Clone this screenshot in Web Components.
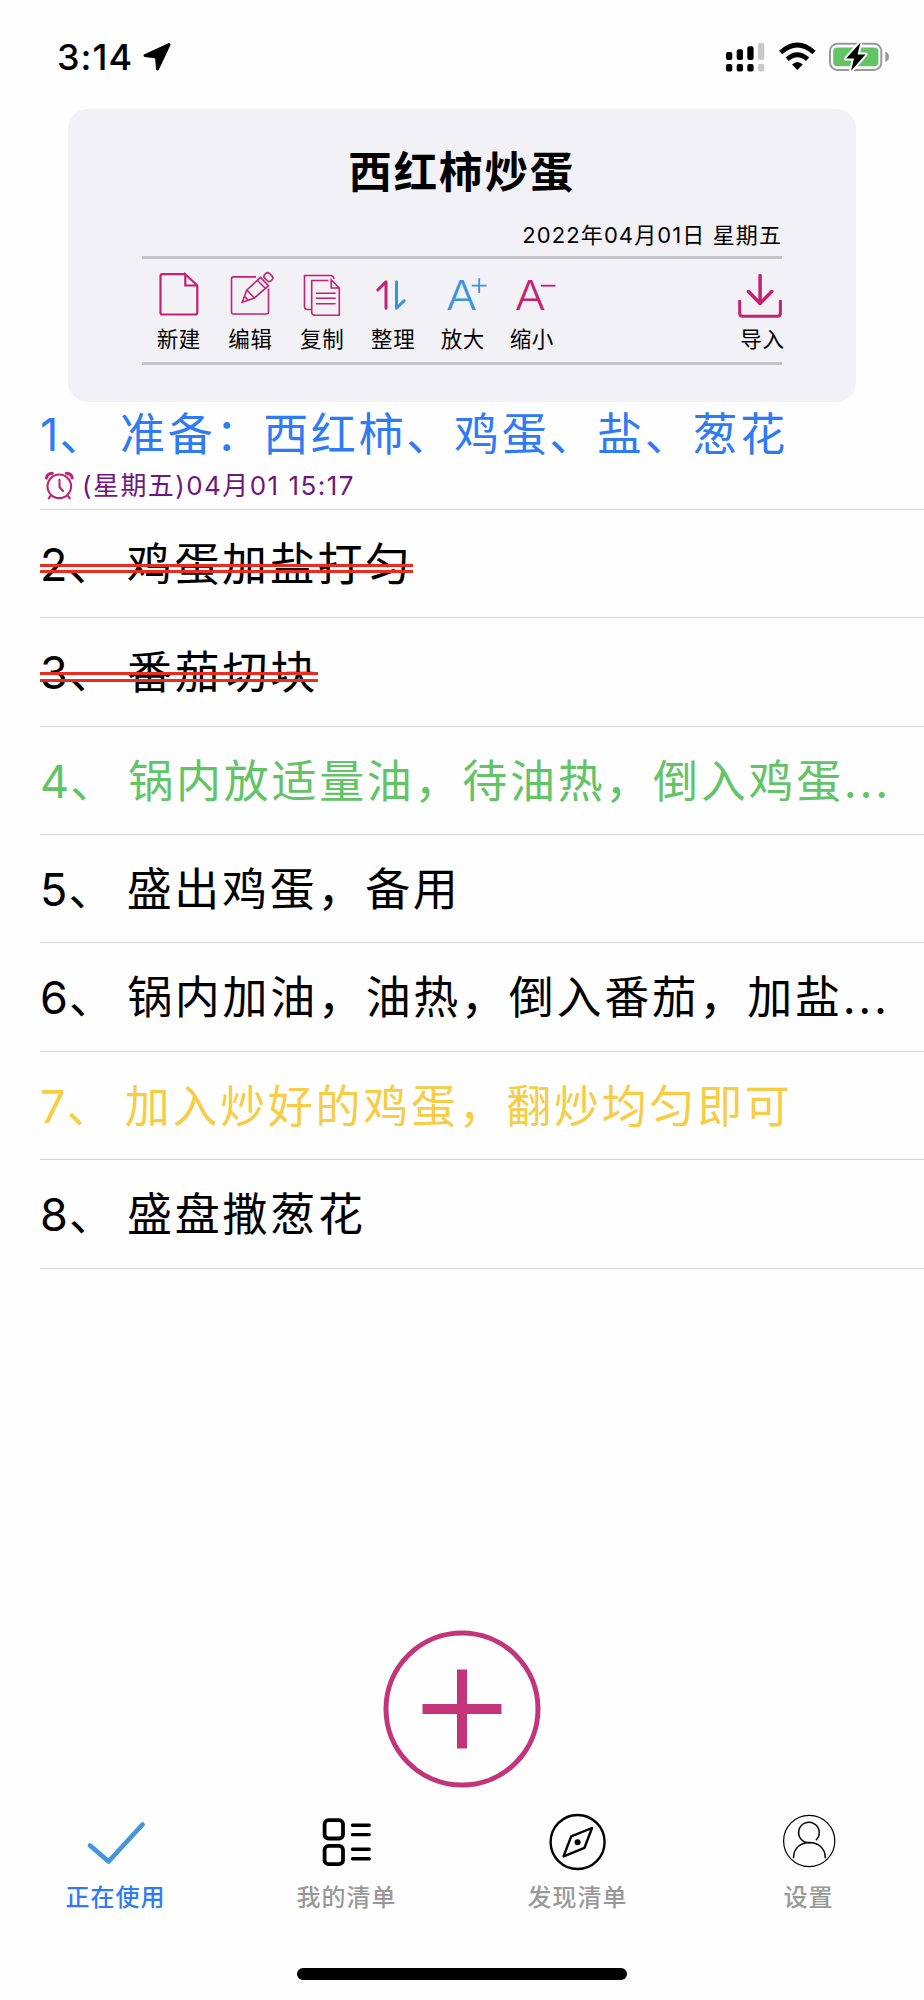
<!DOCTYPE html>
<html lang="zh-CN">
<head>
<meta charset="utf-8">
<title>西红柿炒蛋</title>
<style>
	body{
		margin: 0;
		background: #fefefe;
		color: #000;
		font-family: Inter, "Noto Sans CJK SC", sans-serif;
	}
</style>
</head>
<body>
<check-app>
	<status-bar time="3:14"></status-bar>
	<list-header name="西红柿炒蛋" date="2022年04月01日 星期五">
		<tool-button icon="new">新建</tool-button>
		<tool-button icon="edit">编辑</tool-button>
		<tool-button icon="copy">复制</tool-button>
		<tool-button icon="sort">整理</tool-button>
		<tool-button icon="bigger">放大</tool-button>
		<tool-button icon="smaller">缩小</tool-button>
		<tool-button icon="import" class="last">导入</tool-button>
	</list-header>
	<list-item num="1" color="#2f7bf6" remind="(星期五)04月01 15:17">准备：西红柿、鸡蛋、盐、葱花</list-item>
	<list-item num="2" done>鸡蛋加盐打匀</list-item>
	<list-item num="3" done>番茄切块</list-item>
	<list-item num="4" color="#62c466">锅内放适量油，待油热，倒入鸡蛋...</list-item>
	<list-item num="5">盛出鸡蛋，备用</list-item>
	<list-item num="6">锅内加油，油热，倒入番茄，加盐...</list-item>
	<list-item num="7" color="#f6cd45">加入炒好的鸡蛋，翻炒均匀即可</list-item>
	<list-item num="8">盛盘撒葱花</list-item>
	<add-button slot="bottom"></add-button>
	<tab-bar slot="bottom">
		<tab-item icon="check" selected>正在使用</tab-item>
		<tab-item icon="list">我的清单</tab-item>
		<tab-item icon="compass">发现清单</tab-item>
		<tab-item icon="user">设置</tab-item>
	</tab-bar>
</check-app>

<script>
const PINK = '#c4226f';
const BLUE = '#3a94da';

// toolbar icons, 60 x 52
const TOOL_ICONS = {
	new: `<g stroke="${PINK}" stroke-width="2.2"><path d="M37.3 6.2H14.5q-2 0-2 2V44.5q0 2 2 2H47.3q2 0 2-2V17.5L37.3 6.2V17.5H49"/></g>`,
	edit: `<g stroke="${PINK}" stroke-width="1.6">
		<path d="M36 8.9H13.5q-2 0-2 2V44q0 2 2 2H46.5q2 0 2-2V20.5"/>
		<path d="M26.8 22L40.5 9.4L48.5 17.7L34.5 30L22.2 34.3ZM26.8 22L34.5 30M37.5 12.5L45.5 20.5M24.7 28.5L28 32"/>
		<rect x="44" y="5.8" width="8.8" height="6.6" rx="2.5" transform="rotate(45 48.4 9.1)"/></g>`,
	copy: `<g stroke="${PINK}" stroke-width="1.6">
		<path d="M42 11Q41.5 7.5 38.5 7.5H12.5V38.5q0 3 3 3H19.5"/>
		<path d="M36.5 12.5H19.7V44q0 3.3 3.3 3.3H47.3V20L39.2 12V20H47.3"/>
		<path d="M24 25.2H43.7M24 30.3H43.7M24 35.7H43.7"/></g>`,
	sort: `<g stroke-width="3" stroke-linecap="round" stroke-linejoin="round">
		<path stroke="${PINK}" d="M14.8 22L23 13.8V40.2"/>
		<path stroke="${BLUE}" d="M33.5 13.8V40.2L41 32.9"/></g>`,
	bigger: `<text x="14" y="42" textLength="31" lengthAdjust="spacingAndGlyphs" fill="${BLUE}">A</text><path stroke="${BLUE}" stroke-width="1.8" d="M39.8 17.7H54.5M47.2 10.3V25"/>`,
	smaller: `<text x="13.7" y="42" textLength="31" lengthAdjust="spacingAndGlyphs" fill="${PINK}">A</text><path stroke="${PINK}" stroke-width="1.8" d="M39.8 17.7H54.5"/>`,
	import: `<g stroke="${PINK}" stroke-width="3.5" stroke-linecap="round" stroke-linejoin="round">
		<path d="M28.1 7.5V35.5M16.5 23.5L28.1 35.5L39.8 23.5"/>
		<path stroke-width="3" stroke-linecap="butt" d="M7.7 32V45.3q0 3 3 3H45.4q3 0 3-3V32"/></g>`
};

// tab icons, 60 x 60
const TAB_ICONS = {
	check: `<path stroke="#4696d8" stroke-width="4.8" stroke-linecap="round" stroke-linejoin="round" d="M4 33.5L22.6 49.5L56.5 12.5"/>`,
	list: `<g stroke="#000" stroke-width="3.8"><rect x="7.6" y="8.1" width="18.4" height="18.4" rx="4"/><rect x="7.6" y="33.8" width="18.4" height="18.4" rx="4"/></g>
		<path stroke="#000" stroke-width="3.4" stroke-linecap="round" d="M35.5 13.3H52.2M35.5 22.6H52.2M35.5 37.3H52.2M35.5 46.7H52.2"/>`,
	compass: `<g stroke="#000" stroke-width="2.4" stroke-linejoin="round"><circle cx="29.6" cy="30" r="27"/><path d="M44 16L23.2 24.4L15.6 44.3L36.5 35.8Z"/></g><circle cx="29.6" cy="30.2" r="3" fill="#000"/>`,
	user: `<g stroke="#000"><circle cx="30.2" cy="29" r="25.6" stroke-width="1.2"/>
		<path stroke-width="1.5" stroke-linecap="round" d="M37.3 27.8A10.3 10.3 0 1 0 30.2 30.9M14.5 45.8C14.6 25.3 46.2 25.3 46.3 45.8"/></g>`
};

class CheckApp extends HTMLElement {

	constructor(){
		super();
		this.attachShadow({mode : 'open'}).innerHTML = `
			<style>
				:host{
					display: flex;
					flex-direction: column;
					height: 2000px;
					width: 924px;
					overflow: hidden;
				}
				.bottom{
					margin-top: auto;
				}
			</style>
			<slot></slot>
			<div class="bottom"><slot name="bottom"></slot></div>
		`;
	}
}

class StatusBar extends HTMLElement {

	connectedCallback(){
		this.attachShadow({mode : 'open'}).innerHTML = `
			<style>
				:host{
					display: flex;
					align-items: center;
					box-sizing: border-box;
					height: 108.5px;
					padding: 5px 32px 0 57px;
				}
				.time{
					font-size: 36px;
					font-weight: 500;
					line-height: 44px;
					letter-spacing: 1px;
				}
				.arrow{
					margin-left: 8.5px;
				}
				.right{
					margin-left: auto;
				}
			</style>
			<span class="time">${this.getAttribute('time')}</span>
			<svg class="arrow" width="30" height="30" viewBox="0 0 30 30"><path d="M27 2.5L3 13.5L14.5 15L15.5 27Z" stroke="#000" stroke-width="3" stroke-linejoin="round"/></svg>
			<svg class="right" width="168" height="34" viewBox="0 0 168 34" fill="none">
				<g fill="#000">
					<rect x="2" y="12" width="6.3" height="8" rx="2"/><rect x="12.7" y="9.3" width="6.3" height="10.7" rx="2"/><rect x="23.3" y="6.2" width="6.3" height="13.8" rx="2"/>
					<rect x="2" y="24" width="6.3" height="7.5" rx="2"/><rect x="12.7" y="24" width="6.3" height="7.5" rx="2"/><rect x="23.3" y="24" width="6.3" height="7.5" rx="2"/>
				</g>
				<g fill="#c9c9c9"><rect x="34" y="2.7" width="6.3" height="17.3" rx="2"/><rect x="34" y="24" width="6.3" height="7.5" rx="2"/></g>
				<g stroke="#000" stroke-width="4.8"><path d="M56.7 12.5Q73.4-2.5 90.1 12.5"/><path d="M63.2 19.2Q73.4 10.3 83.6 19.2"/></g>
				<path fill="#000" d="M68 24.5Q73.4 19.5 78.8 24.5L73.4 30Z"/>
				<rect x="106" y="3.7" width="51.3" height="26.2" rx="7.5" stroke="#999" stroke-width="2"/>
				<rect x="109.2" y="7.6" width="45.2" height="18.6" rx="4" fill="#63c466"/>
				<path fill="#999" d="M161.3 11.5Q165 13 165 16.7Q165 20.5 161.3 22Z"/>
				<path fill="#000" stroke="#fefefe" stroke-width="4" stroke-linejoin="round" paint-order="stroke" d="M136.5 2.5L122 18.5H130L127 31L141.5 14.5H133.5Z"/>
			</svg>
		`;
	}
}

class ListHeader extends HTMLElement {

	connectedCallback(){
		this.attachShadow({mode : 'open'}).innerHTML = `
			<style>
				:host{
					display: block;
					box-sizing: border-box;
					height: 293px;
					margin: 0 68px;
					padding: 32px 74px 0 73.5px;
					border-radius: 20px;
					background: #f2f1f6;
				}
				h1{
					margin: 0;
					font-size: 43.5px;
					font-weight: 700;
					line-height: 62px;
					letter-spacing: 1.9px;
					text-align: center;
				}
				.date{
					margin-top: 17px;
					height: 36px;
					font-size: 22px;
					line-height: 30px;
					letter-spacing: 1.1px;
					text-align: right;
				}
				.tools{
					display: grid;
					grid-template-columns: 71.7px 71.7px 71.7px 70.3px 69px 69px 1fr;
					box-sizing: border-box;
					height: 109px;
					padding: 9px 0 0 1px;
					border-top: 3px solid #c4c3c7;
					border-bottom: 3px solid #c4c3c7;
				}
				::slotted(.last){
					justify-self: end;
					margin-right: -10px;
				}
			</style>
			<h1>${this.getAttribute('name')}</h1>
			<div class="date">${this.getAttribute('date')}</div>
			<div class="tools"><slot></slot></div>
		`;
	}
}

class ToolButton extends HTMLElement {

	connectedCallback(){
		this.attachShadow({mode : 'open'}).innerHTML = `
			<style>
				:host{
					display: flex;
					flex-direction: column;
					align-items: center;
					font-size: 21.5px;
					line-height: 30px;
					letter-spacing: 0.7px;
					white-space: nowrap;
				}
				svg{
					display: block;
					margin-bottom: 4px;
				}
				text{
					font: 300 41px Inter, sans-serif;
					letter-spacing: 0;
				}
				span{
					margin-left: 1px;
				}
			</style>
			<svg width="60" height="52" viewBox="0 0 60 52" fill="none">${TOOL_ICONS[this.getAttribute('icon')]}</svg>
			<span><slot></slot></span>
		`;
	}
}

class ListItem extends HTMLElement {

	connectedCallback(){
		const remind = this.getAttribute('remind');
		this.attachShadow({mode : 'open'}).innerHTML = `
			<style>
				:host{
					display: flex;
					flex-direction: column;
					justify-content: center;
					box-sizing: border-box;
					height: 108.4px;
					margin-left: 40px;
					padding-top: 2.6px;
					border-bottom: 1px solid #d4d4d6;
					color: ${this.getAttribute('color') || '#000'};
				}
				:host([remind]){
					justify-content: flex-start;
				}
				.text{
					position: relative;
					align-self: flex-start;
					font-size: 45px;
					line-height: 62px;
					letter-spacing: 2.7px;
					white-space: nowrap;
				}
				.num{
					margin-right: -2px;
					letter-spacing: 1.2px;
				}
				:host([remind]) .num{
					margin-right: 0.5px;
				}
				:host([done]) .text::after{
					content: "";
					position: absolute;
					left: 0;
					right: 0;
					top: 30px;
					height: 3.5px;
					border-top: 3px solid #eb2d1f;
					border-bottom: 3px solid #eb2d1f;
				}
				.remind{
					display: flex;
					align-items: center;
					height: 36px;
					margin-top: 2px;
					padding-left: 4px;
					color: #701680;
					font-size: 26px;
					line-height: 36px;
					letter-spacing: 1.45px;
					white-space: nowrap;
				}
				.remind span{
					margin-top: -1px;
				}
				.remind svg{
					margin-right: 7px;
				}
			</style>
			<div class="text"><span class="num">${this.getAttribute('num')}、 </span><slot></slot></div>
			${remind ? `<div class="remind">
				<svg width="31" height="30" viewBox="0 0 31 30" fill="none" stroke="${PINK}" stroke-width="2.1" stroke-linecap="round">
					<circle cx="15.3" cy="15.3" r="11.8"/>
					<path d="M15.5 8.5V16L19 20M6.5 25L4.7 27.3M24 25L25.8 27.3"/>
					<path stroke-width="3" d="M2.5 7Q3 2.5 8.3 2.3M28.2 7Q27.7 2.5 22.4 2.3"/>
				</svg><span>${remind}</span></div>` : ''}
		`;
	}
}

class AddButton extends HTMLElement {

	constructor(){
		super();
		this.attachShadow({mode : 'open'}).innerHTML = `
			<style>
				:host{
					display: flex;
					justify-content: center;
				}
			</style>
			<svg width="158" height="158" viewBox="0 0 158 158" fill="none" stroke="#c3347a">
				<circle cx="79" cy="79" r="76" stroke-width="5"/>
				<path stroke-width="10" d="M39.5 79H118.5M79 39.5V118.5"/>
			</svg>
		`;
	}
}

class TabBar extends HTMLElement {

	constructor(){
		super();
		this.attachShadow({mode : 'open'}).innerHTML = `
			<style>
				:host{
					display: flex;
					flex-direction: column;
					align-items: center;
					justify-content: space-between;
					box-sizing: border-box;
					height: 212px;
					padding: 24px 0 20px;
				}
				.tabs{
					display: grid;
					grid-template-columns: repeat(4, 231px);
				}
				.home{
					width: 330px;
					height: 12px;
					border-radius: 6px;
					background: #000;
				}
			</style>
			<div class="tabs"><slot></slot></div>
			<div class="home"></div>
		`;
	}
}

class TabItem extends HTMLElement {

	connectedCallback(){
		this.attachShadow({mode : 'open'}).innerHTML = `
			<style>
				:host{
					display: flex;
					flex-direction: column;
					align-items: center;
					color: #999;
					font-size: 24px;
					font-weight: 500;
					line-height: 34px;
					letter-spacing: 1px;
				}
				:host([selected]){
					color: #2f7bf6;
				}
				svg{
					display: block;
					margin-bottom: 9px;
				}
			</style>
			<svg width="60" height="60" viewBox="0 0 60 60" fill="none">${TAB_ICONS[this.getAttribute('icon')]}</svg>
			<span><slot></slot></span>
		`;
	}
}

window.customElements.define('check-app', CheckApp);
window.customElements.define('status-bar', StatusBar);
window.customElements.define('list-header', ListHeader);
window.customElements.define('tool-button', ToolButton);
window.customElements.define('list-item', ListItem);
window.customElements.define('add-button', AddButton);
window.customElements.define('tab-bar', TabBar);
window.customElements.define('tab-item', TabItem);
</script>
</body>
</html>
